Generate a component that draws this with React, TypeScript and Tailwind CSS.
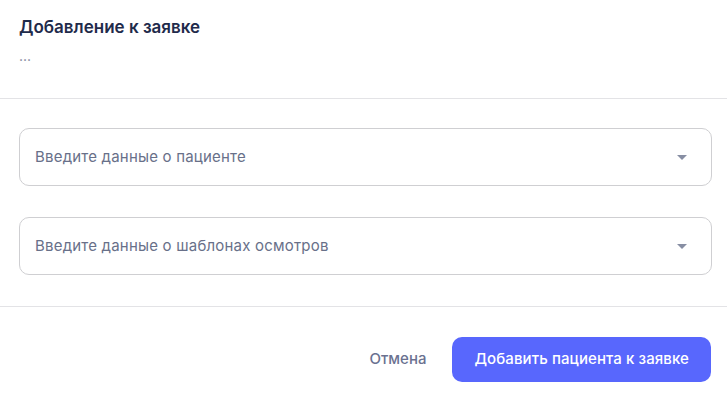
import React from "react";

function Caret() {
  return (
    <svg width="10" height="5" viewBox="0 0 10 5" className="shrink-0">
      <path d="M0 0 L10 0 L5 5 Z" fill="#878ea3" />
    </svg>
  );
}

function Field({ placeholder }: { placeholder: string }) {
  return (
    <div className="flex h-[58px] items-center justify-between rounded-[10px] border border-[#cfcfd2] bg-white pl-[15px] pr-[24px]">
      <span className="text-[15px] tracking-[0.2px] text-[#687089]">{placeholder}</span>
      <Caret />
    </div>
  );
}

export default function App() {
  return (
    <div
      className="flex h-[397px] w-[727px] flex-col bg-white"
      style={{ fontFamily: "Inter, 'Noto Sans', sans-serif" }}
    >
      <div className="flex h-[98px] flex-col pl-[19px] pr-[15px] pt-[15px]">
        <div className="text-[17px] font-semibold leading-[24px] text-[#1f2b4b]">
          Добавление к заявке
        </div>
        <div className="mt-[7px] text-[14px] leading-[20px] text-[#7d849a]">...</div>
      </div>
      <div className="h-px bg-[#e3e3e6]" />
      <div className="flex flex-col gap-[31px] pl-[19px] pr-[15px] pt-[29px] pb-[31px]">
        <Field placeholder="Введите данные о пациенте" />
        <Field placeholder="Введите данные о шаблонах осмотров" />
      </div>
      <div className="h-px bg-[#e3e3e6]" />
      <div className="flex items-center justify-end gap-[26px] pl-[19px] pr-[16px] pt-[30px]">
        <button className="text-[15px] font-medium text-[#6a7190]">Отмена</button>
        <button className="h-[45px] rounded-[10px] bg-[#5867fd] px-[22px] text-[15px] font-medium tracking-[0.1px] text-white">
          Добавить пациента к заявке
        </button>
      </div>
    </div>
  );
}
